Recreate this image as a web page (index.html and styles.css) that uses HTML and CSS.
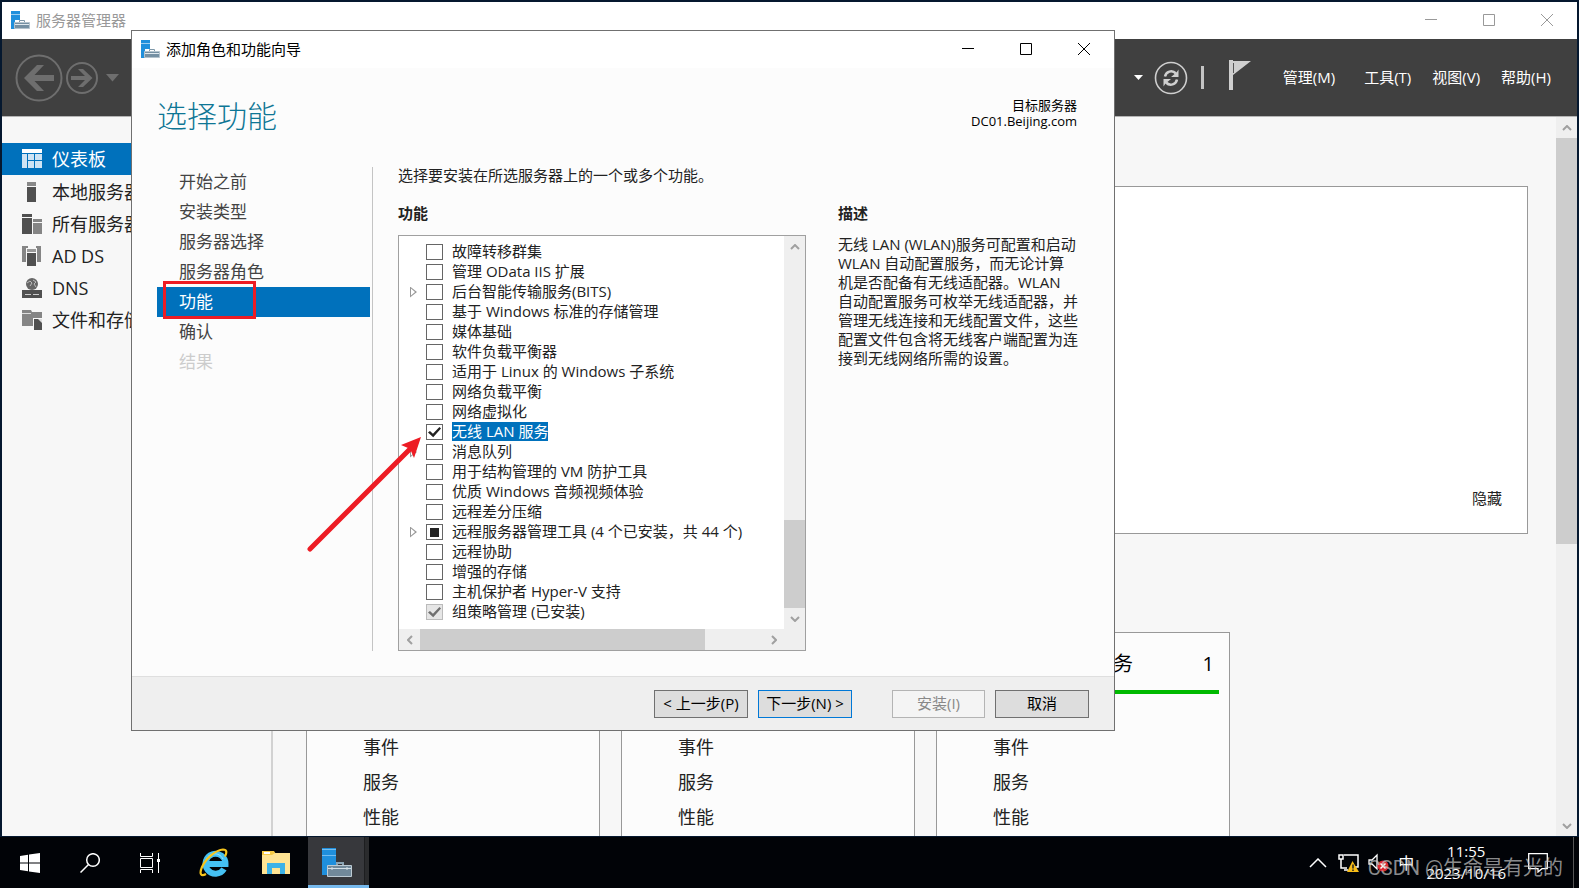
FILE: index.html
```html
<!DOCTYPE html>
<html lang="zh-CN">
<head>
<meta charset="utf-8">
<title>服务器管理器</title>
<link rel="stylesheet" href="styles.css">
</head>
<body>
<svg class="defs" aria-hidden="true">
  <symbol id="server-logo" viewBox="0 0 20 20">
    <path fill="#1f8fdc" d="M1 1h9v9H5v9H1z"/><path fill="#9ccdf0" d="M1 4h9v1H1z"/>
    <path fill="none" stroke="#7d97a8" d="M9.500 12v-1.500h5V12"/>
    <path fill="#7590a3" stroke="#b4c3cd" d="M4.500 12.500h15v6h-15z"/><path fill="#dfe8ee" d="M5 14h14v1H5z"/>
  </symbol>
  <symbol id="chev-up" viewBox="0 0 10 6"><path fill="none" stroke="#a0a0a0" stroke-width="2" d="M1 5l4-4 4 4"/></symbol>
  <symbol id="chev-down" viewBox="0 0 10 6"><path fill="none" stroke="#a0a0a0" stroke-width="2" d="M1 1l4 4 4-4"/></symbol>
</svg>

<div class="desktop">
  <section class="window">
    <header class="titlebar titlebar-inactive">
      <svg class="logo"><use href="#server-logo"/></svg>
      <span class="title">服务器管理器</span>
      <div class="controls">
        <button aria-label="最小化"><svg viewBox="0 0 12 12"><path d="M0 5.500h12"/></svg></button>
        <button aria-label="最大化"><svg viewBox="0 0 12 12"><path d="M.5.5h11v11H.5z"/></svg></button>
        <button aria-label="关闭"><svg viewBox="0 0 12 12"><path d="M0 0l12 12M12 0L0 12"/></svg></button>
      </div>
    </header>

    <div class="toolbar">
      <div class="history">
        <button aria-label="后退"><svg width="48" height="48" viewBox="0 0 48 48"><circle cx="24" cy="24" r="22.500" fill="none" stroke="#6e6e6e" stroke-width="2"/><path fill="#6e6e6e" d="M9 24l13-13h7L19.500 21H39v6H19.500L29 37h-7z"/></svg></button>
        <button aria-label="前进" class="forward"><svg width="34" height="34" viewBox="0 0 34 34"><circle cx="17" cy="17" r="15" fill="none" stroke="#6e6e6e" stroke-width="2"/><path fill="#6e6e6e" d="M27.500 17L18 26h-5l7-7H6v-4h14l-7-7h5z"/></svg></button>
        <button aria-label="历史记录" class="history-caret"><svg width="13" height="8" viewBox="0 0 13 8"><path fill="#6e6e6e" d="M0 0h13L6.500 7.500z"/></svg></button>
      </div>
      <div class="tools">
        <svg width="10" height="6" viewBox="0 0 10 6"><path fill="#fff" d="M0 0h9L4.500 5z"/></svg>
        <button aria-label="刷新" class="refresh"><svg width="34" height="34" viewBox="0 0 34 34" fill="none" stroke="#cfcfcf"><circle cx="17" cy="17" r="15.500" stroke-width="1.600"/><path stroke-width="2.500" d="M11 15.500c1-5 7-7 11-3M23 18.500c-1 5-7 7-11 3"/><path fill="#cfcfcf" stroke="none" d="M24.500 8.500v7.500h-7.500l3-2.500 2.500-2zM9.500 25.500V18H17l-3 2.500-2.500 2z"/></svg></button>
        <span class="divider"></span>
        <button aria-label="通知" class="flag"><svg width="22" height="30" viewBox="0 0 22 30"><path fill="#cfcfcf" d="M0 0h4v30H0zM4 1h18L4 15z"/><path fill="none" stroke="#555" d="M4.500 3v10"/></svg></button>
        <nav class="menu"><button>管理(M)</button><button>工具(T)</button><button>视图(V)</button><button>帮助(H)</button></nav>
      </div>
    </div>

    <div class="workspace">
      <nav class="sidebar">
        <a href="#" class="active"><svg viewBox="0 0 20 20"><path fill="#fff" d="M0 0h20v4H0z"/><path fill="#cfe4f4" d="M0 5h5v14H0zM6 5h6v6H6zM13 5h7v6h-7zM6 12h6v7H6zM13 12h7v7h-7z"/></svg>仪表板</a>
        <a href="#"><svg viewBox="0 0 20 20"><path fill="#888" d="M5 0h9v4H5z"/><path fill="#505050" d="M5 5h9v15H5z"/></svg>本地服务器</a>
        <a href="#"><svg viewBox="0 0 20 20"><path fill="#505050" d="M0 0h10v3H0zM0 4h10v16H0z"/><path fill="#858585" d="M11 5h9v3h-9zM11 9h9v11h-9z"/></svg>所有服务器</a>
        <a href="#"><svg viewBox="0 0 20 20"><path fill="#858585" d="M0 0h6v2H4v14H0zM14 0h5v16h-4V2h-1z"/><path fill="#999" d="M5 3h9v3H5z"/><path fill="#505050" d="M5 7h9v13H5z"/></svg>AD DS</a>
        <a href="#"><svg viewBox="0 0 20 20"><circle cx="10" cy="6" r="6" fill="#666"/><path fill="none" stroke="#bbb" d="M5 5l3-2 2 2-2 3M11 2l3 2-2 2 2 3"/><path fill="#505050" d="M0 12h20v8H0z"/><path stroke="#ccc" d="M3 16.500h6M11 16.500h6"/></svg>DNS</a>
        <a href="#"><svg viewBox="0 0 20 20"><path fill="#858585" d="M0 0h9l1 2h10v6h-9v8H0z"/><path stroke="#ddd" d="M0 3.500h9"/><path fill="#505050" d="M12 9h8v11h-8z"/><path fill="#ddd" d="M16 9h4v4z"/></svg>文件和存储服务</a>
      </nav>
      <main class="dashboard">
        <section class="welcome"><button>隐藏</button></section>
        <div class="tiles">
          <article class="tile"><h3>AD DS<span>1</span></h3><ul><li>事件</li><li>服务</li><li>性能</li></ul></article>
          <article class="tile"><h3>DNS<span>1</span></h3><ul><li>事件</li><li>服务</li><li>性能</li></ul></article>
          <article class="tile"><h3>文件和存储服务<span>1</span></h3><ul><li>事件</li><li>服务</li><li>性能</li></ul></article>
        </div>
      </main>
      <div class="vbar page-bar">
        <span class="bar-button"><svg width="10" height="6"><use href="#chev-up"/></svg></span>
        <span class="bar-track"><span class="bar-thumb"></span></span>
        <span class="bar-button"><svg width="10" height="6"><use href="#chev-down"/></svg></span>
      </div>
    </div>
  </section>

  <section class="dialog" role="dialog" aria-label="添加角色和功能向导">
    <header class="titlebar">
      <svg class="logo"><use href="#server-logo"/></svg>
      <span class="title">添加角色和功能向导</span>
      <div class="controls">
        <button aria-label="最小化"><svg viewBox="0 0 12 12"><path d="M0 5.500h12"/></svg></button>
        <button aria-label="最大化"><svg viewBox="0 0 12 12"><path d="M.5.5h11v11H.5z"/></svg></button>
        <button aria-label="关闭"><svg viewBox="0 0 12 12"><path d="M0 0l12 12M12 0L0 12"/></svg></button>
      </div>
    </header>
    <div class="heading">
      <h1>选择功能</h1>
      <p>目标服务器<br>DC01.Beijing.com</p>
    </div>
    <div class="wizard">
      <nav class="steps">
        <a href="#">开始之前</a><a href="#">安装类型</a><a href="#">服务器选择</a><a href="#">服务器角色</a>
        <a href="#" class="current">功能<span class="highlight"></span></a>
        <a href="#">确认</a><a class="disabled">结果</a>
      </nav>
      <div class="features">
        <p class="intro">选择要安装在所选服务器上的一个或多个功能。</p>
        <h2>功能</h2>
        <div class="listbox">
          <ul class="tree">
            <li><input type="checkbox" id="f1"><label for="f1">故障转移群集</label></li>
            <li><input type="checkbox" id="f2"><label for="f2">管理 OData IIS 扩展</label></li>
            <li class="parent"><input type="checkbox" id="f3"><label for="f3">后台智能传输服务(BITS)</label></li>
            <li><input type="checkbox" id="f4"><label for="f4">基于 Windows 标准的存储管理</label></li>
            <li><input type="checkbox" id="f5"><label for="f5">媒体基础</label></li>
            <li><input type="checkbox" id="f6"><label for="f6">软件负载平衡器</label></li>
            <li><input type="checkbox" id="f7"><label for="f7">适用于 Linux 的 Windows 子系统</label></li>
            <li><input type="checkbox" id="f8"><label for="f8">网络负载平衡</label></li>
            <li><input type="checkbox" id="f9"><label for="f9">网络虚拟化</label></li>
            <li class="selected"><input type="checkbox" id="f10" checked><label for="f10">无线 LAN 服务</label></li>
            <li class="parent"><input type="checkbox" id="f11"><label for="f11">消息队列</label></li>
            <li><input type="checkbox" id="f12"><label for="f12">用于结构管理的 VM 防护工具</label></li>
            <li><input type="checkbox" id="f13"><label for="f13">优质 Windows 音频视频体验</label></li>
            <li><input type="checkbox" id="f14"><label for="f14">远程差分压缩</label></li>
            <li class="parent"><input type="checkbox" id="f15" class="partial"><label for="f15">远程服务器管理工具 (4 个已安装，共 44 个)</label></li>
            <li><input type="checkbox" id="f16"><label for="f16">远程协助</label></li>
            <li><input type="checkbox" id="f17"><label for="f17">增强的存储</label></li>
            <li><input type="checkbox" id="f18"><label for="f18">主机保护者 Hyper-V 支持</label></li>
            <li><input type="checkbox" id="f19" checked disabled><label for="f19">组策略管理 (已安装)</label></li>
          </ul>
          <div class="vbar list-bar">
            <span class="bar-button"><svg width="10" height="6"><use href="#chev-up"/></svg></span>
            <span class="bar-track"><span class="bar-thumb"></span></span>
            <span class="bar-button"><svg width="10" height="6"><use href="#chev-down"/></svg></span>
          </div>
          <div class="hbar">
            <span class="bar-button"><svg width="6" height="10" viewBox="0 0 6 10"><path fill="none" stroke="#a0a0a0" stroke-width="2" d="M5 1L1 5l4 4"/></svg></span>
            <span class="bar-track"><span class="bar-thumb"></span></span>
            <span class="bar-button"><svg width="6" height="10" viewBox="0 0 6 10"><path fill="none" stroke="#a0a0a0" stroke-width="2" d="M1 1l4 4-4 4"/></svg></span>
          </div>
        </div>
      </div>
      <aside class="description">
        <h2>描述</h2>
        <p>无线 LAN (WLAN)服务可配置和启动<br>WLAN 自动配置服务，而无论计算<br>机是否配备有无线适配器。WLAN<br>自动配置服务可枚举无线适配器，并<br>管理无线连接和无线配置文件，这些<br>配置文件包含将无线客户端配置为连<br>接到无线网络所需的设置。</p>
      </aside>
    </div>
    <footer class="actions">
      <button>&lt; 上一步(P)</button>
      <button class="primary">下一步(N) &gt;</button>
      <button class="install" disabled>安装(I)</button>
      <button>取消</button>
    </footer>
    <svg class="arrow" width="120" height="122" viewBox="0 0 120 122"><path stroke="#ed1c24" stroke-width="5" stroke-linecap="round" d="M4 116L104 16"/><path fill="#ed1c24" d="M115 4L95 12l7 3 3 3 3 7z"/></svg>
  </section>
</div>

<footer class="taskbar">
  <div class="apps">
    <button aria-label="开始"><svg width="20" height="20" viewBox="0 0 20 20"><path fill="#fff" d="M0 3l8-1.200V9.500H0zM9 1.600L20 0v9.500H9zM0 10.500h8v7.700L0 17zM9 10.500h11V20L9 18.400z"/></svg></button>
    <button aria-label="搜索"><svg width="20" height="20" viewBox="0 0 20 20" fill="none" stroke="#fff" stroke-width="1.500"><circle cx="13" cy="7" r="6.300"/><path d="M8.500 11.500L.5 19.500"/></svg></button>
    <button aria-label="任务视图"><svg width="20" height="20" viewBox="0 0 20 20" fill="none" stroke="#fff"><path d="M.5 0v3.500h12V0M.5 5.500h12v9H.5zM.5 20v-3.500h12V20M18.500 0v20"/><path fill="#fff" stroke="none" d="M17 6h3v3h-3z"/></svg></button>
    <button aria-label="Internet Explorer" class="browser"><svg width="30" height="30" viewBox="0 0 30 30"><path fill="none" stroke="#45c1f3" stroke-width="6" d="M25 21a10 10 0 1 1 1.500-5H9"/><path fill="none" stroke="#9be5ff" stroke-width="1" d="M7 12c2-7 13-9 17-1"/><path fill="none" stroke="#f6c51d" stroke-width="2.200" d="M7 26c-5 3-7 0-4-7C7 10 17 2 24 1.500c4 0 4 3 2 7"/></svg></button>
    <button aria-label="文件资源管理器" class="explorer"><svg width="28" height="24" viewBox="0 0 28 24"><path fill="#f7cb45" d="M0 0h12l2 3h13v20H0z"/><path fill="#fff" d="M2 1h6v2H2z"/><path fill="#ffe493" d="M0 4h10l3-2h15v21H0z"/><path fill="#3cb2e7" d="M5 23V12h18v11h-5v-6h-8v6z"/></svg></button>
    <button aria-label="服务器管理器" class="running"><svg width="30" height="30" viewBox="0 0 30 30"><path fill="#1f8fdc" d="M0 0h14v17H6v10H0z"/><path fill="#74bdf0" d="M0 1h14v1H0zM0 7h14v1H0z"/><path fill="none" stroke="#8ca5b5" stroke-width="2" d="M15 17v-2h6v2"/><path fill="#71899a" stroke="#bdcbd4" d="M5.500 17.500h24v11h-24z"/><path fill="none" stroke="#d5e0e7" d="M6 20.500h23M10 19v3M25 19v3"/></svg></button>
  </div>
  <div class="tray">
    <svg class="expand" width="18" height="10" viewBox="0 0 18 10"><path fill="none" stroke="#fff" stroke-width="1.500" d="M1 9l8-8 8 8"/></svg>
    <svg class="network" width="22" height="20" viewBox="0 0 22 20"><path fill="none" stroke="#fff" stroke-width="1.500" d="M6 2h14v12h-8M1 2h4v4H1zM3 6v9h6M6 17h4"/><path fill="#f8bd17" d="M14.500 8L21 19H9z"/><path stroke="#222" stroke-width="1.500" d="M15 11.500v4M15 16.500v1.500"/></svg>
    <svg class="volume" width="22" height="20" viewBox="0 0 22 20"><path fill="none" stroke="#fff" stroke-width="1.300" d="M1 7h3l5-5v14l-5-5H1z"/><circle cx="15" cy="13" r="5.500" fill="#dc2b32"/><path stroke="#fff" stroke-width="1.500" d="M12.500 10.500l5 5M17.500 10.500l-5 5"/></svg>
    <span class="ime">中</span>
    <time class="clock">11:55<br>2023/10/16</time>
    <svg class="notice" width="20" height="20" viewBox="0 0 20 20"><path fill="none" stroke="#fff" stroke-width="1.300" d="M.7.7h18.600v15H14L10 19v-3.300H.7z"/></svg>
    <span class="peek"></span>
  </div>
  <span class="watermark">CSDN @生命是有光的</span>
</footer>
</body>
</html>
```
FILE: styles.css
```css
* { box-sizing: border-box; }

body {
  margin: 0;
  height: 100vh;
  display: flex;
  flex-direction: column;
  overflow: hidden;
  background: #05182f;
  color: #222;
  font: 15px/20px "Open Sans", "Noto Sans CJK SC", sans-serif;
}

h1, h2, h3, p, ul { margin: 0; padding: 0; font-weight: normal; }
ul { list-style: none; }
a { color: inherit; text-decoration: none; }
button { margin: 0; padding: 0; border: 0; background: none; color: inherit; font: inherit; white-space: nowrap; }
svg { display: block; flex: none; }
.defs { position: absolute; width: 0; height: 0; }

.desktop {
  position: relative;
  flex: 1;
  min-height: 0;
  display: flex;
  padding: 2px 2px 1px;
}

/* Shared window chrome */
.window { flex: 1; min-width: 0; display: flex; flex-direction: column; background: #f7f7f7; }
.titlebar { flex: none; display: flex; align-items: center; height: 37px; padding: 0 1px 2px 8px; background: #fff; color: #000; }
.titlebar-inactive { color: #999; }
.logo { width: 20px; height: 20px; }
.title { margin-left: 6px; }
.controls { display: flex; margin-left: auto; }
.controls button { display: grid; place-items: center; width: 58px; height: 35px; }
.controls svg { width: 12px; height: 12px; fill: none; stroke: currentColor; overflow: visible; }

/* Main toolbar */
.toolbar {
  flex: none;
  display: flex;
  align-items: center;
  justify-content: space-between;
  height: 78px;
  padding: 0 26px 0 13px;
  border-bottom: 1px solid #b4b4b4;
  background: #404040;
  color: #fff;
}
.history, .tools, .menu { display: flex; align-items: center; }
.forward { margin-left: 2px; }
.history-caret { margin-left: 7px; }
.refresh { margin-left: 10px; }
.divider { width: 3px; height: 23px; margin-left: 13px; background: #c4c4c4; }
.flag { margin: 0 32px 6px 25px; }
.menu { gap: 21px; padding-bottom: 2px; }
.menu button:first-child { margin-right: 8px; }

/* Main window body */
.workspace { flex: 1; min-height: 0; display: flex; }
.sidebar { flex: none; width: 271px; padding-top: 26px; border-right: 2px solid #d2d2d2; font-size: 18px; overflow: hidden; }
.sidebar a { display: flex; align-items: center; gap: 10px; height: 32px; padding-left: 20px; white-space: nowrap; }
.sidebar svg { width: 20px; height: 20px; }
.sidebar .active { margin-bottom: 1px; background: #0071bc; color: #fff; }
.dashboard { flex: 1; min-width: 0; padding: 69px 28px 0 33px; overflow: hidden; }
.welcome { display: flex; align-items: flex-end; justify-content: flex-end; height: 348px; padding: 25px; border: 1px solid #999; background: #fff; }
.tiles { display: grid; grid-template-columns: repeat(3, 294px); gap: 21px; margin-top: 98px; }
.tile { height: 260px; padding: 0 10px; border: 1px solid #999; background: #fcfcfc; }
.tile h3 { display: flex; justify-content: space-between; height: 61px; padding: 16px 5px 0 46px; border-bottom: 4px solid #00b900; color: #000; font-size: 20px; line-height: 30px; }
.tile ul { padding: 36px 0 0 46px; font-size: 18px; line-height: 35px; }

/* Scroll bars */
.vbar { display: flex; flex-direction: column; width: 21px; background: #efefef; }
.hbar { display: flex; height: 21px; background: #efefef; }
.bar-button { flex: none; display: grid; place-items: center; width: 21px; height: 21px; }
.bar-track { flex: 1; display: block; }
.bar-thumb { display: block; background: #cdcdcd; }
.vbar .bar-thumb { width: 100%; }
.hbar .bar-thumb { height: 100%; width: 83%; }
.page-bar .bar-thumb { height: 60%; }
.list-bar .bar-track { display: flex; align-items: flex-end; }
.list-bar .bar-thumb { height: 25%; }

/* Wizard window, floating over the manager */
.dialog {
  position: absolute;
  inset: 30px 464px 106px 131px;
  min-width: 960px;
  display: flex;
  flex-direction: column;
  border: 1px solid #707070;
  background: #fcfcfc;
}
.heading { flex: none; display: flex; justify-content: space-between; height: 99px; padding: 28px 37px 0 25px; }
.heading h1 { color: #0e7695; font-size: 30px; font-weight: 300; line-height: 40px; }
.heading p { padding-top: 1px; color: #000; font-size: 13px; line-height: 16px; text-align: right; }
.wizard { flex: 1; min-height: 0; display: flex; padding-left: 25px; }
.steps { width: 216px; padding-right: 2px; border-right: 1px solid #c4c4c4; color: #444; font-size: 17px; line-height: 30px; }
.steps a { display: block; position: relative; height: 30px; padding-left: 22px; }
.steps .current { background: #0071bc; color: #fff; }
.steps .disabled { color: #ccc; }
.highlight { position: absolute; inset: -6px auto -2px 6px; width: 93px; border: 3px solid #ed1c24; }
.features { width: 408px; display: flex; flex-direction: column; margin-left: 25px; }
.intro { line-height: 16px; }
.wizard h2 { font-size: 15px; font-weight: bold; line-height: 20px; }
.features h2 { margin: 20px 0 12px; }
.description { margin: 36px 0 0 32px; }
.description p { margin-top: 12px; line-height: 19px; white-space: nowrap; }

.listbox { flex: 1; min-height: 0; display: grid; grid-template: minmax(0, 1fr) 21px / minmax(0, 1fr) 21px; border: 1px solid #a0a0a0; background: #fff; }
.tree { padding-top: 5px; overflow: hidden; }
.tree li { display: flex; align-items: center; height: 20px; padding-left: 27px; }
.tree label { margin-left: 9px; line-height: 19px; white-space: nowrap; }
.tree .selected label { background: #0071bc; color: #fff; }
.tree .parent::before { content: ""; flex: none; width: 7px; height: 11px; margin: 2px 9px 0 -16px; background: #999; clip-path: polygon(evenodd, 0 0, 100% 50%, 0 100%, 0 0, 1px 2px, 1px 9px, 5px 50%, 1px 2px); }
.tree input { appearance: none; flex: none; display: grid; place-items: center; width: 17px; height: 16px; margin: 2px 0 0; border: 1px solid #666; background: #fff; }
.tree input:checked::before { content: ""; width: 13px; height: 11px; background: #222; clip-path: polygon(0 55%, 15% 42%, 38% 65%, 88% 5%, 100% 18%, 40% 98%); }
.tree input:disabled { border-color: #bbb; background: #e6e6e6; }
.tree input:disabled::before { background: #707070; }
.tree .partial::before { content: ""; width: 9px; height: 9px; background: #222; }
.listbox::after { content: ""; background: #efefef; }

.actions { flex: none; display: flex; gap: 10px; height: 54px; margin-top: 25px; padding: 13px 25px; border-top: 1px solid #dfdfdf; background: #efefef; color: #000; justify-content: flex-end; }
.actions button { width: 94px; height: 28px; padding-bottom: 2px; border: 1px solid #707070; background: #ddd; }
.actions .primary { border-color: #0078d7; }
.actions .install { width: 93px; margin-left: 30px; border-color: #b4b4b4; background: #f4f4f4; color: #888; }
.arrow { position: absolute; left: 174px; top: 402px; }

/* Taskbar */
.taskbar { position: relative; flex: none; display: flex; justify-content: space-between; height: 51px; background: #010307; color: #fff; }
.apps, .tray { display: flex; align-items: center; }
.apps button { display: grid; place-items: center; width: 60px; height: 51px; }
.apps .browser { margin-left: 4px; }
.apps .explorer { margin-left: 2px; }
.apps .running { width: 61px; margin-left: 2px; padding: 3px 4px 0 0; border-bottom: 3px solid #76b9ed; background: linear-gradient(90deg, #37383c 56px, #1d1e20 56px 57px, #2a2b2d 57px); }
.network { margin-left: 11px; }
.volume { margin-left: 8px; }
.ime { margin-left: 8px; font-size: 16px; }
.clock { margin-left: 12px; padding-bottom: 2px; text-align: center; line-height: 22px; }
.notice { margin-left: 22px; }
.peek { width: 1px; height: 100%; margin: 0 5px 0 25px; background: #555; }
.watermark { position: absolute; right: 16px; bottom: 6px; color: rgba(200, 200, 200, .7); font: 20px/28px Roboto, "Noto Sans CJK SC", sans-serif; }
```
